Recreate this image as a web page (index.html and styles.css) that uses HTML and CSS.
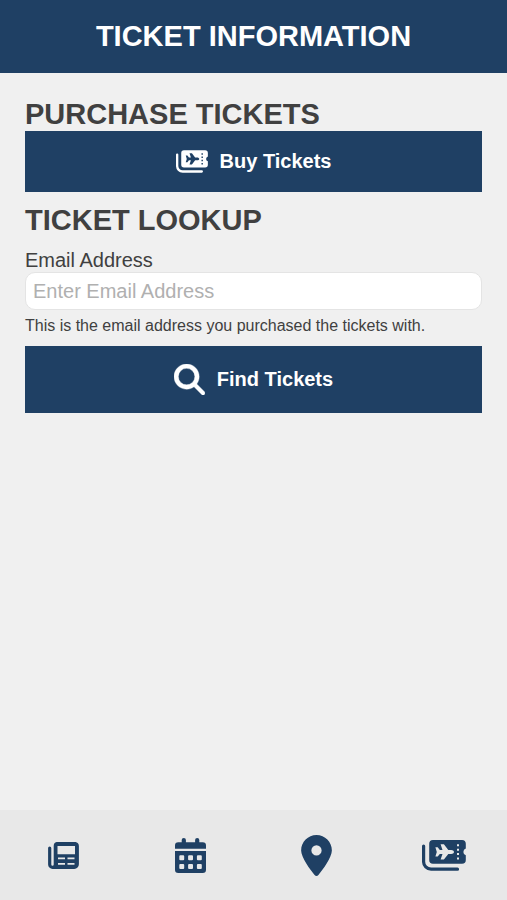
FILE: index.html
```html
<!DOCTYPE html>
<html lang="en">
<head>
  <meta charset="utf-8">
  <meta name="viewport" content="width=device-width, initial-scale=1">
  <title>Ticket Information</title>
  <link rel="stylesheet" href="styles.css">
</head>
<body>
  <svg class="sprite" aria-hidden="true">
    <symbol id="tickets" viewBox="0 0 44 31">
      <path d="M1.600 6v15.500a7.500 7.500 0 0 0 7.500 7.700H35.500" fill="none" stroke="currentColor" stroke-width="3.200" stroke-linecap="round"/>
      <path fill="currentColor" fill-rule="evenodd" d="M11 0H40a3.800 3.800 0 0 1 3.800 3.800V8.500a3.600 3.600 0 0 0 0 6.800V20a3.800 3.800 0 0 1-3.800 3.800H11A3.800 3.800 0 0 1 7.200 20V3.800A3.800 3.800 0 0 1 11 0ZM18.600 4.300l1.900 5.600h-2.700l-2.100-2.600h-2.300l1.400 4.600-1.400 4.600h2.300l2.100-2.600h2.700L18.600 19.500h3.300l4.400-5.600h2.900c1.400 0 2.800-.9 2.800-2s-1.400-2-2.800-2h-2.900L21.900 4.300ZM35 4.300v2h2v-2ZM35 8.700v2h2v-2ZM35 13.100v2h2v-2ZM35 17.500v2h2v-2Z"/>
    </symbol>
  </svg>

  <header class="header">
    <h1 class="title">TICKET INFORMATION</h1>
  </header>

  <main class="content">
    <section>
      <h2 class="heading">PURCHASE TICKETS</h2>
      <button class="button" type="button">
        <svg class="button-icon-tickets" aria-hidden="true"><use href="#tickets"/></svg>
        <span>Buy Tickets</span>
      </button>
    </section>

    <section class="lookup">
      <h2 class="heading">TICKET LOOKUP</h2>
      <form class="form">
        <label class="label" for="email">Email Address</label>
        <input class="input" id="email" type="email" placeholder="Enter Email Address" aria-describedby="email-help">
        <p class="help" id="email-help">This is the email address you purchased the tickets with.</p>
        <button class="button button-find" type="button">
          <svg class="button-icon-search" viewBox="0 0 512 512" aria-hidden="true">
            <path fill="currentColor" d="M416 208c0 45.900-14.900 88.300-40 122.700L502.600 457.400c12.500 12.500 12.500 32.800 0 45.300s-32.800 12.500-45.300 0L330.700 376c-34.400 25.200-76.800 40-122.700 40C93.100 416 0 322.900 0 208S93.100 0 208 0s208 93.100 208 208zM208 344a136 136 0 1 0 0-272 136 136 0 1 0 0 272z" stroke="currentColor" stroke-width="6"/>
          </svg>
          <span>Find Tickets</span>
        </button>
      </form>
    </section>
  </main>

  <nav class="tabs" aria-label="Main">
    <a class="tab" href="#news" aria-label="News">
      <svg class="icon-news" viewBox="0 0 31 27" aria-hidden="true">
        <path d="M1.700 6v16.500a2.800 2.800 0 0 0 5.600 0V4a2.500 2.500 0 0 1 2.500-2.500h17A2.500 2.500 0 0 1 29.300 4v18.300a3 3 0 0 1-3 3H4.500" fill="none" stroke="currentColor" stroke-width="3.200" stroke-linecap="round"/>
        <path fill="currentColor" fill-rule="evenodd" d="M7.500 2h22v23h-22ZM9.500 4v8.200h17.500V4ZM10 15.500v1.800h7v-1.800ZM19.500 15.500v1.800h7v-1.800ZM10 21v1.800h7v-1.800ZM19.500 21v1.800h7v-1.800Z"/>
      </svg>
    </a>
    <a class="tab" href="#calendar" aria-label="Calendar">
      <svg class="icon-calendar" viewBox="0 0 31 35" aria-hidden="true">
        <path fill="currentColor" d="M0 10.800V7.500a3.300 3.300 0 0 1 3.300-3.300H6.700V2.100a2.100 2.100 0 0 1 4.200 0v2.100h9.200V2.100a2.100 2.100 0 0 1 4.200 0v2.100h3.400A3.300 3.300 0 0 1 31 7.500v3.300Z"/>
        <path fill="currentColor" fill-rule="evenodd" d="M0 13H31V31.700a3.300 3.300 0 0 1-3.300 3.300H3.300A3.300 3.300 0 0 1 0 31.700ZM5.300 17.300h2.900a1 1 0 0 1 1 1v2.900a1 1 0 0 1-1 1H5.300a1 1 0 0 1-1-1v-2.900a1 1 0 0 1 1-1ZM14.100 17.300h2.900a1 1 0 0 1 1 1v2.900a1 1 0 0 1-1 1h-2.900a1 1 0 0 1-1-1v-2.900a1 1 0 0 1 1-1ZM22.900 17.300h2.900a1 1 0 0 1 1 1v2.900a1 1 0 0 1-1 1h-2.900a1 1 0 0 1-1-1v-2.900a1 1 0 0 1 1-1ZM5.300 26h2.900a1 1 0 0 1 1 1v2.900a1 1 0 0 1-1 1H5.300a1 1 0 0 1-1-1v-2.900a1 1 0 0 1 1-1ZM14.100 26h2.900a1 1 0 0 1 1 1v2.900a1 1 0 0 1-1 1h-2.900a1 1 0 0 1-1-1v-2.900a1 1 0 0 1 1-1ZM22.900 26h2.900a1 1 0 0 1 1 1v2.900a1 1 0 0 1-1 1h-2.900a1 1 0 0 1-1-1v-2.900a1 1 0 0 1 1-1Z"/>
      </svg>
    </a>
    <a class="tab" href="#map" aria-label="Map">
      <svg class="icon-pin" viewBox="0 0 384 512" aria-hidden="true">
        <path fill="currentColor" d="M215.700 499.200C267 435 384 279.400 384 192 384 86 298 0 192 0S0 86 0 192c0 87.400 117 243 168.300 307.200 12.300 15.300 35.100 15.300 47.400 0zM192 128a64 64 0 1 1 0 128 64 64 0 1 1 0-128z"/>
      </svg>
    </a>
    <a class="tab" href="#tickets-page" aria-label="Tickets" aria-current="page">
      <svg class="icon-tickets" aria-hidden="true"><use href="#tickets"/></svg>
    </a>
  </nav>
</body>
</html>
```

FILE: styles.css
```css
:root {
  --navy: #1f4064;
  --text: #404040;
}

* {
  box-sizing: border-box;
  margin: 0;
}

body {
  display: flex;
  flex-direction: column;
  min-height: 100vh;
  background: #f0f0f0;
  color: var(--text);
  font-family: "Liberation Sans", Arial, sans-serif;
}

svg {
  display: block;
  flex: none;
}

.sprite {
  position: absolute;
  width: 0;
  height: 0;
}

.header {
  padding: 20px 24px;
  background: var(--navy);
  color: #fff;
  text-align: center;
}

.title {
  font-size: 29px;
  line-height: 33px;
}

.content {
  flex: 1;
  padding: 25px;
}

.heading {
  font-size: 29px;
  line-height: 33px;
}

.lookup {
  margin-top: 12px;
}

.button {
  display: flex;
  align-items: center;
  justify-content: center;
  gap: 12px;
  width: 100%;
  padding: 19px 16px;
  border: 0;
  background: var(--navy);
  color: #fff;
  font: bold 20px/23px "Liberation Sans", Arial, sans-serif;
}

.button-find {
  padding-block: 18px;
}

.button-icon-tickets {
  width: 32px;
  height: 23px;
}

.button-icon-search {
  width: 31px;
  height: 31px;
}

.form {
  display: flex;
  flex-direction: column;
  padding-top: 12px;
}

.label {
  font-size: 20px;
  line-height: 23px;
}

.input {
  width: 100%;
  padding: 7px;
  border: 1px solid #e4e4e4;
  border-radius: 10px;
  background: #fff;
  color: var(--text);
  font: 20px/22px "Liberation Sans", Arial, sans-serif;
}

.input::placeholder {
  color: #b0b0b0;
  opacity: 1;
}

.help {
  padding: 6px 0 10px;
  font-size: 16px;
  line-height: 20px;
}

.tabs {
  display: grid;
  grid-template-columns: repeat(4, 1fr);
  height: 90px;
  background: #e8e8e8;
}

.tab {
  display: flex;
  align-items: center;
  justify-content: center;
  color: var(--navy);
}

.icon-news {
  width: 31px;
  height: 27px;
}

.icon-calendar {
  width: 31px;
  height: 35px;
}

.icon-pin {
  width: 31px;
  height: 41px;
}

.icon-tickets {
  width: 44px;
  height: 31px;
}
```
